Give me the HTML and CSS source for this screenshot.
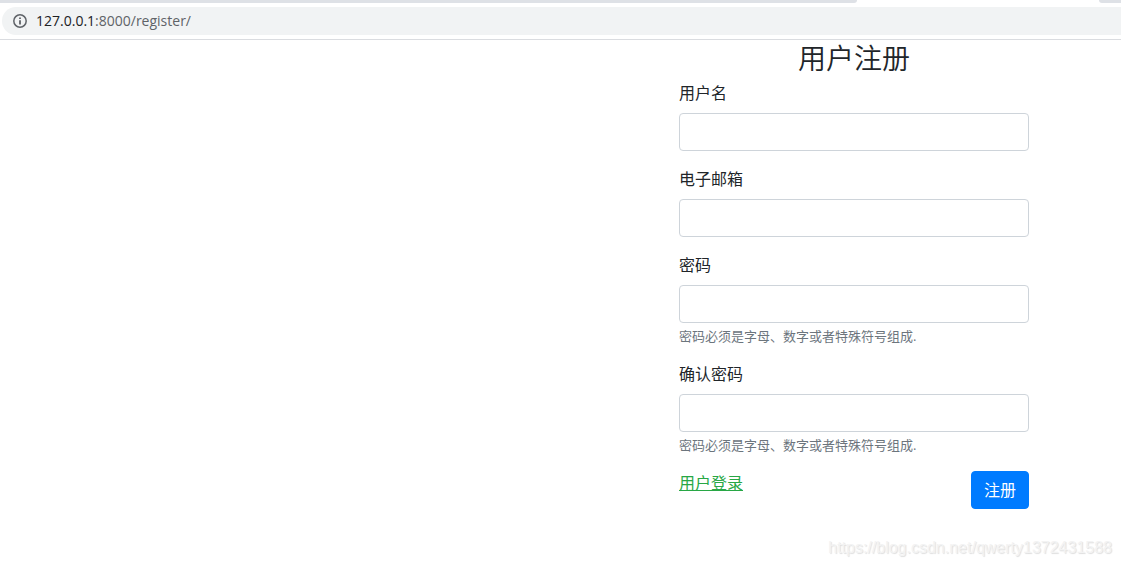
FILE: index.html
```html
<!DOCTYPE html>
<html lang="zh-CN">
<head>
<meta charset="utf-8">
<meta name="viewport" content="width=device-width, initial-scale=1">
<title>用户注册</title>
<link rel="stylesheet" href="styles.css">
</head>
<body>
<header class="browser">
  <div class="tabs"><div class="tabs-left"></div><div class="tabs-right"></div></div>
  <div class="address">
    <svg class="info" viewBox="0 0 16 16" aria-hidden="true">
      <circle cx="8" cy="8" r="6.2" fill="none" stroke="#5f6368" stroke-width="1.5"/>
      <path d="M7.1 7.2h1.8v4.3H7.1zM7.1 4.4h1.8v1.7H7.1z" fill="#5f6368"/>
    </svg>
    <span class="url"><span class="host">127.0.0.1</span>:8000/register/</span>
  </div>
</header>
<main class="page">
  <form class="register">
    <h3 class="title">用户注册</h3>
    <div class="group">
      <label class="label" for="username">用户名</label>
      <input class="control" id="username" type="text">
    </div>
    <div class="group">
      <label class="label" for="email">电子邮箱</label>
      <input class="control" id="email" type="email">
    </div>
    <div class="group">
      <label class="label" for="password">密码</label>
      <input class="control" id="password" type="password" aria-describedby="password-help">
      <small class="help" id="password-help">密码必须是字母、数字或者特殊符号组成.</small>
    </div>
    <div class="group">
      <label class="label" for="confirm">确认密码</label>
      <input class="control" id="confirm" type="password" aria-describedby="confirm-help">
      <small class="help" id="confirm-help">密码必须是字母、数字或者特殊符号组成.</small>
    </div>
    <div class="actions">
      <a class="login" href="#">用户登录</a>
      <button class="submit" type="button">注册</button>
    </div>
  </form>
</main>
<footer class="watermark">https://blog.csdn.net/qwerty1372431588</footer>
</body>
</html>
```
FILE: styles.css
```css
* {
  box-sizing: border-box;
}

body {
  margin: 0;
  min-height: 100vh;
  display: flex;
  flex-direction: column;
  background: #fff;
  color: #212529;
  font: 16px/24px "Open Sans", "Noto Sans CJK SC", sans-serif;
}

.browser {
  border-bottom: 1px solid #dadce0;
  padding-bottom: 4px;
}

.tabs {
  display: flex;
  justify-content: space-between;
  height: 3px;
  margin-bottom: 4px;
}

.tabs-left,
.tabs-right {
  background: #dee1e6;
}

.tabs-left {
  flex: 0 1 857px;
  border-bottom-right-radius: 6px;
}

.tabs-right {
  flex: 0 0 22px;
  border-bottom-left-radius: 6px;
}

.address {
  display: flex;
  align-items: center;
  gap: 8px;
  height: 28px;
  margin-left: 2px;
  padding-left: 10px;
  border-radius: 14px 0 0 14px;
  background: #f1f3f4;
}

.info {
  width: 16px;
  height: 16px;
}

.url {
  color: #5f6368;
  font-size: 14px;
}

.host {
  color: #202124;
}

.page {
  display: flex;
  justify-content: flex-end;
  padding: 0 92px 0 16px;
}

.register {
  flex: 0 1 350px;
}

.title {
  margin: 0 0 4px;
  font-size: 28px;
  line-height: 37px;
  font-weight: 350;
  text-align: center;
}

.group {
  display: flex;
  flex-direction: column;
  margin-bottom: 16px;
}

.label {
  margin-bottom: 8px;
}

.control {
  width: 100%;
  height: 38px;
  padding: 6px 12px;
  border: 1px solid #ced4da;
  border-radius: 4px;
  background: #fff;
  color: #495057;
  font: inherit;
}

.help {
  margin-top: 4px;
  color: #6c757d;
  font-size: 13px;
  line-height: 19px;
}

.actions {
  display: flex;
  justify-content: space-between;
  align-items: flex-start;
}

.login {
  color: #28a745;
  text-decoration: underline;
}

.submit {
  padding: 6px 12px;
  border: 1px solid #007bff;
  border-radius: 4px;
  background: #007bff;
  color: #fff;
  font: inherit;
}

.watermark {
  margin-top: auto;
  padding: 0 9px 6px;
  color: #f3f3f3;
  font-family: "Liberation Sans", Arial, sans-serif;
  text-align: right;
  text-shadow: 1px 1px 1px #dedede;
}
```
